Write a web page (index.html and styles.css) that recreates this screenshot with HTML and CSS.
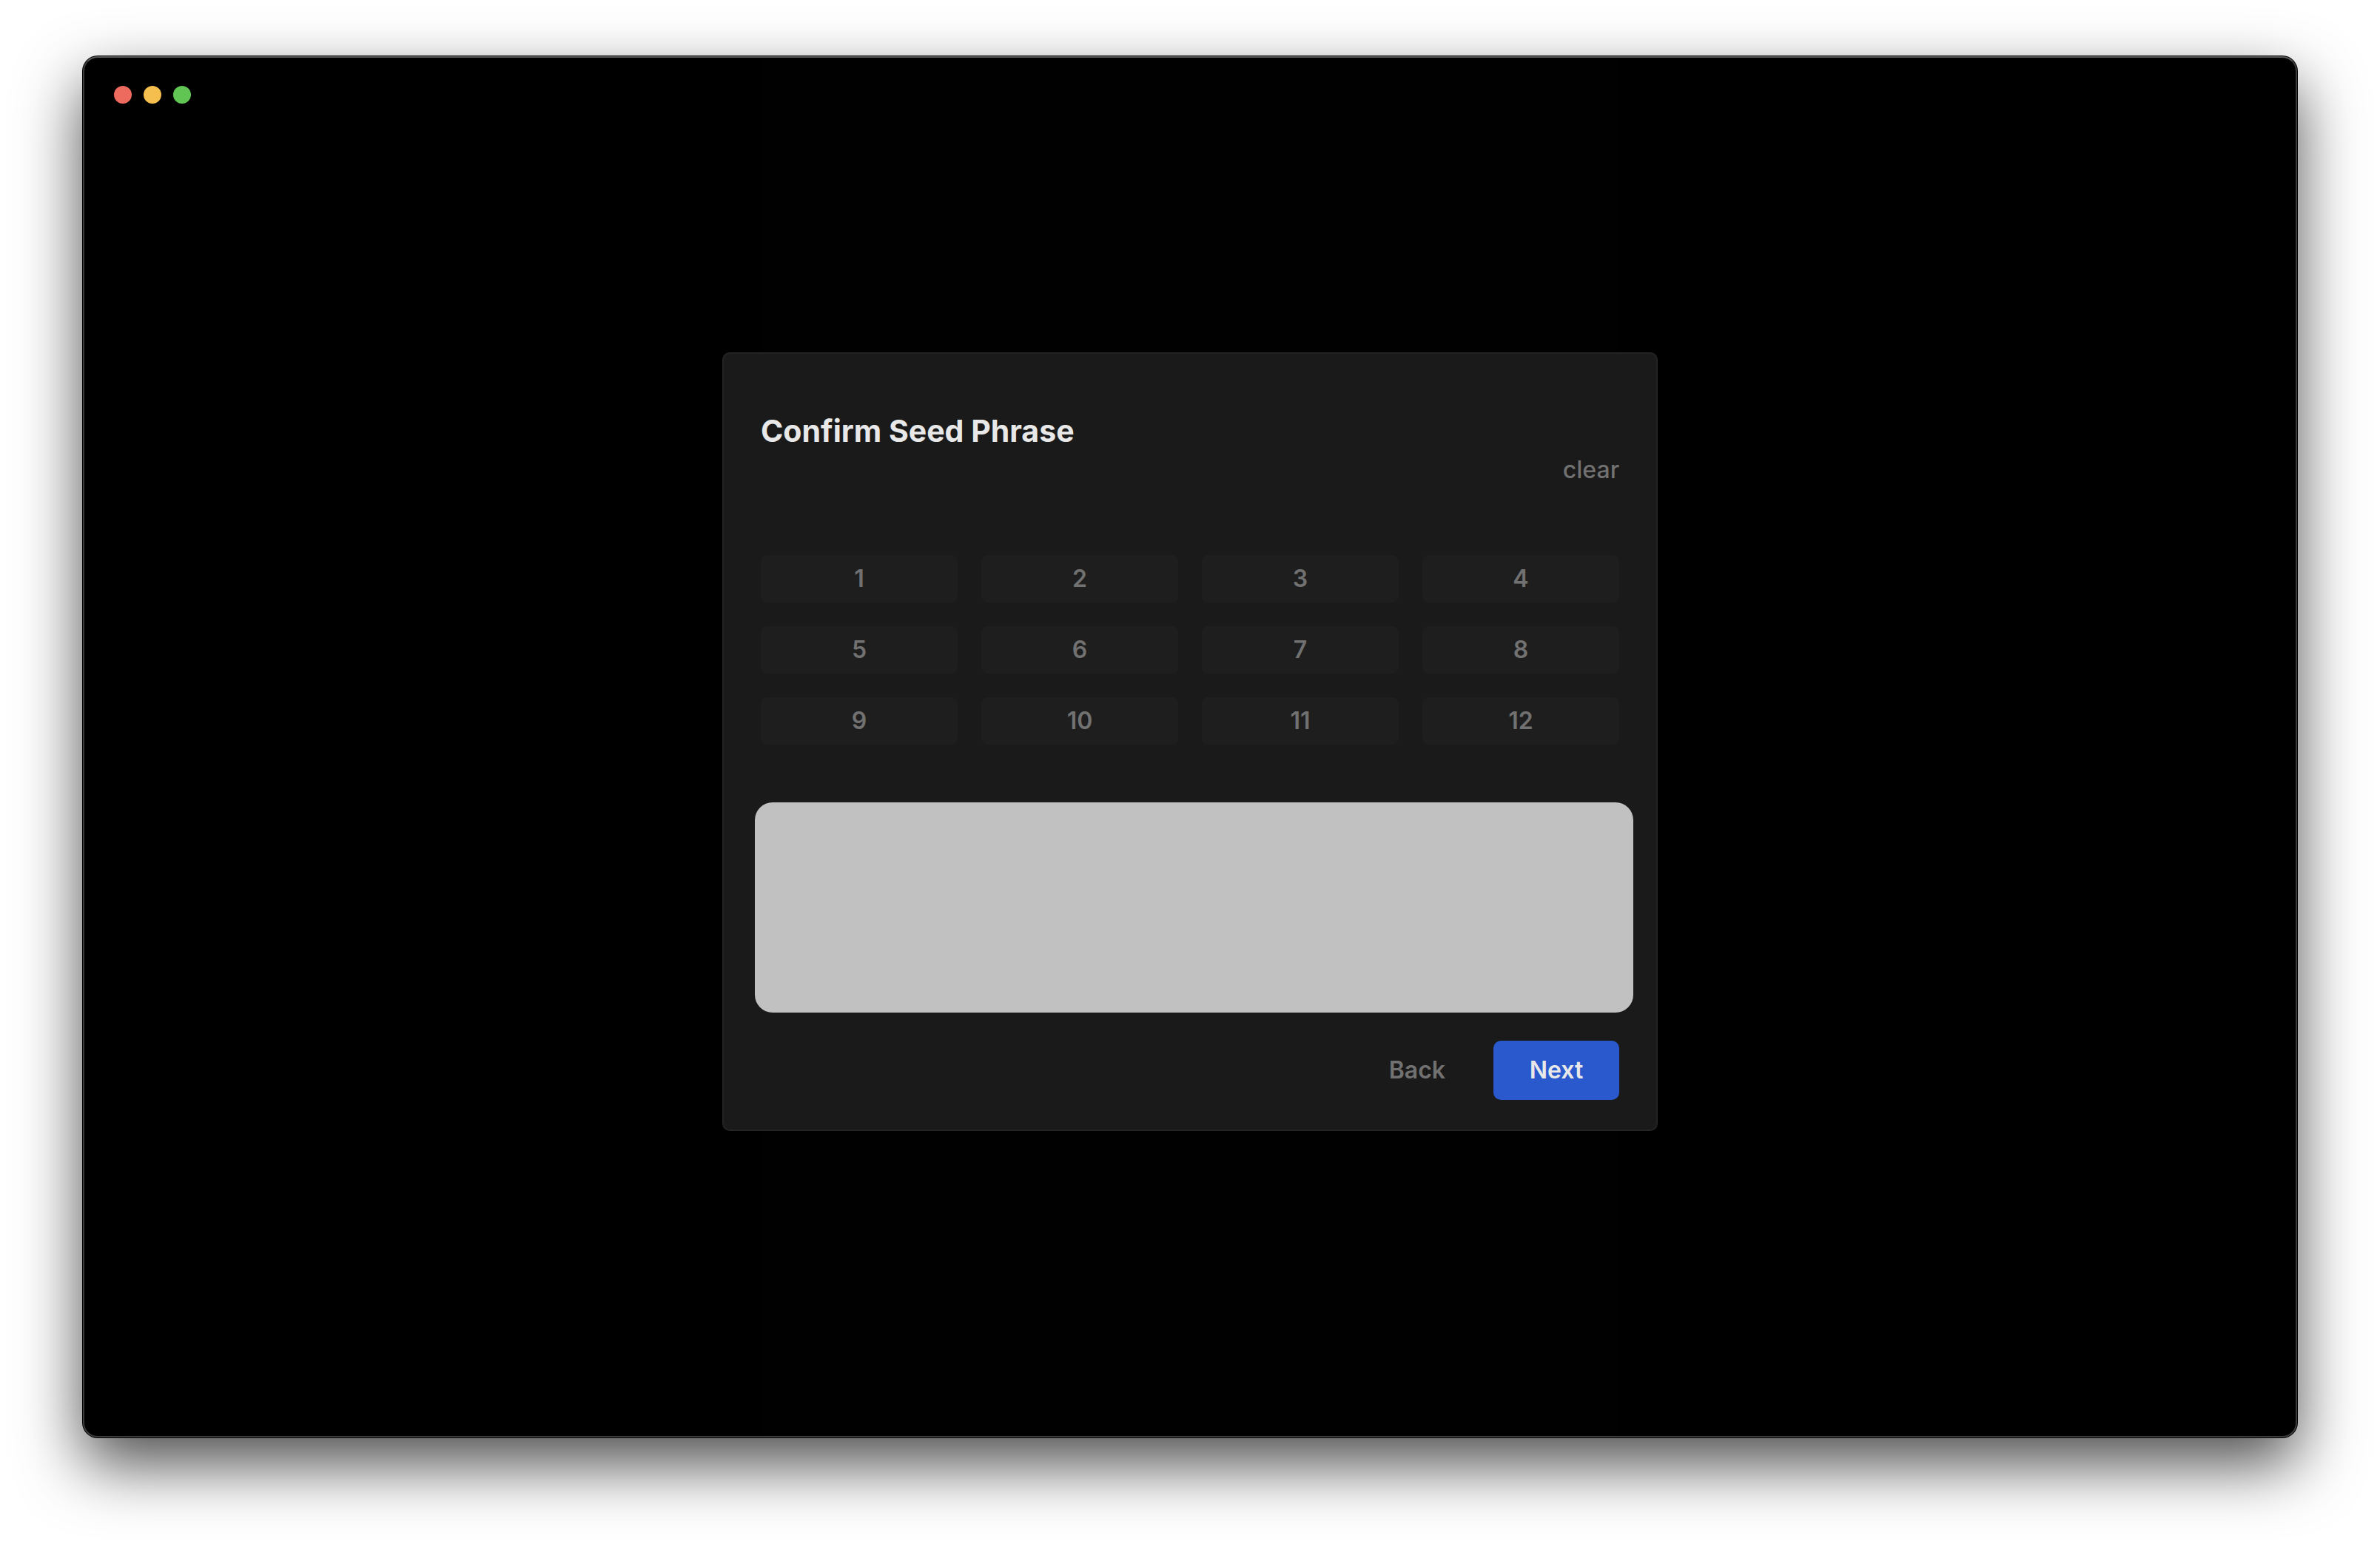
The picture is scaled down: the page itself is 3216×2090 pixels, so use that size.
FILE: index.html
```html
<!DOCTYPE html>
<html lang="en">
<head>
<meta charset="utf-8">
<title>Confirm Seed Phrase</title>
<link rel="stylesheet" href="styles.css">
</head>
<body>
<main class="window">
  <header class="titlebar">
    <button class="light light-close" type="button" aria-label="Close window"></button>
    <button class="light light-minimize" type="button" aria-label="Minimize window"></button>
    <button class="light light-zoom" type="button" aria-label="Zoom window"></button>
  </header>
  <div class="stage">
    <section class="dialog" aria-labelledby="dialog-title">
      <h1 class="title" id="dialog-title">Confirm Seed Phrase</h1>
      <button class="clear" type="button">clear</button>
      <ol class="slots">
        <li class="slot">1</li>
        <li class="slot">2</li>
        <li class="slot">3</li>
        <li class="slot">4</li>
        <li class="slot">5</li>
        <li class="slot">6</li>
        <li class="slot">7</li>
        <li class="slot">8</li>
        <li class="slot">9</li>
        <li class="slot">10</li>
        <li class="slot">11</li>
        <li class="slot">12</li>
      </ol>
      <div class="words"></div>
      <footer class="actions">
        <button class="button" type="button">Back</button>
        <button class="button button-primary" type="button">Next</button>
      </footer>
    </section>
  </div>
</main>
</body>
</html>
```
FILE: styles.css
```css
* {
  box-sizing: border-box;
}

body {
  margin: 0;
  min-height: 100vh;
  display: flex;
  padding: 76px 112px 148px;
  background: #fff;
  color: #e8e8e8;
  font-family: Inter, "Liberation Sans", sans-serif;
  font-size: 32px;
  line-height: 40px;
}

button {
  margin: 0;
  padding: 0;
  border: 0;
  background: none;
  color: inherit;
  font: inherit;
}

.window {
  flex: 1;
  display: flex;
  flex-direction: column;
  border: 2px solid #3c3c3c;
  border-top-color: #5a5a5a;
  border-radius: 20px;
  /* faint column behind the dialog */
  background: #000 linear-gradient(#010101, #010101) center / 1160px 100% no-repeat;
  box-shadow: 0 0 0 1px #000, 0 36px 86px rgba(0, 0, 0, 0.7);
}

.titlebar {
  display: flex;
  gap: 16px;
  padding: 38px 40px 0;
}

.light {
  width: 24px;
  height: 24px;
  border-radius: 50%;
}

.light-close {
  background: #ed6a5e;
}

.light-minimize {
  background: #f5bf4f;
}

.light-zoom {
  background: #61c554;
}

.stage {
  flex: 1;
  display: flex;
  align-items: center;
  justify-content: center;
  padding-bottom: 76px;
}

.dialog {
  display: flex;
  flex-direction: column;
  width: 1264px;
  max-width: 100%;
  padding: 80px 50px 40px;
  border: 2px solid #242424;
  border-radius: 10px;
  background: #1a1a1a;
}

.title {
  margin: 0;
  font-size: 41px;
  font-weight: 700;
  line-height: 48px;
}

.clear {
  align-self: flex-end;
  margin-top: 9px;
  color: #717171;
  font-weight: 500;
}

.slots {
  display: grid;
  grid-template-columns: repeat(4, 1fr);
  gap: 32px;
  margin: 95px 0 0;
  padding: 0;
  list-style: none;
}

.slot {
  padding: 12px;
  border-radius: 8px;
  background: #1e1e1e;
  color: #717171;
  font-weight: 600;
  text-align: center;
}

.words {
  height: 284px;
  margin: 78px -19px 0 -8px;
  border-radius: 24px;
  background: #c1c1c1;
}

.actions {
  display: flex;
  justify-content: flex-end;
  gap: 18px;
  margin-top: 38px;
}

.button {
  min-width: 170px;
  padding: 20px 47px;
  border-radius: 10px;
  color: #717171;
  font-weight: 600;
}

.button-primary {
  background: #2a59cd;
  color: #e8e8e8;
}
```
